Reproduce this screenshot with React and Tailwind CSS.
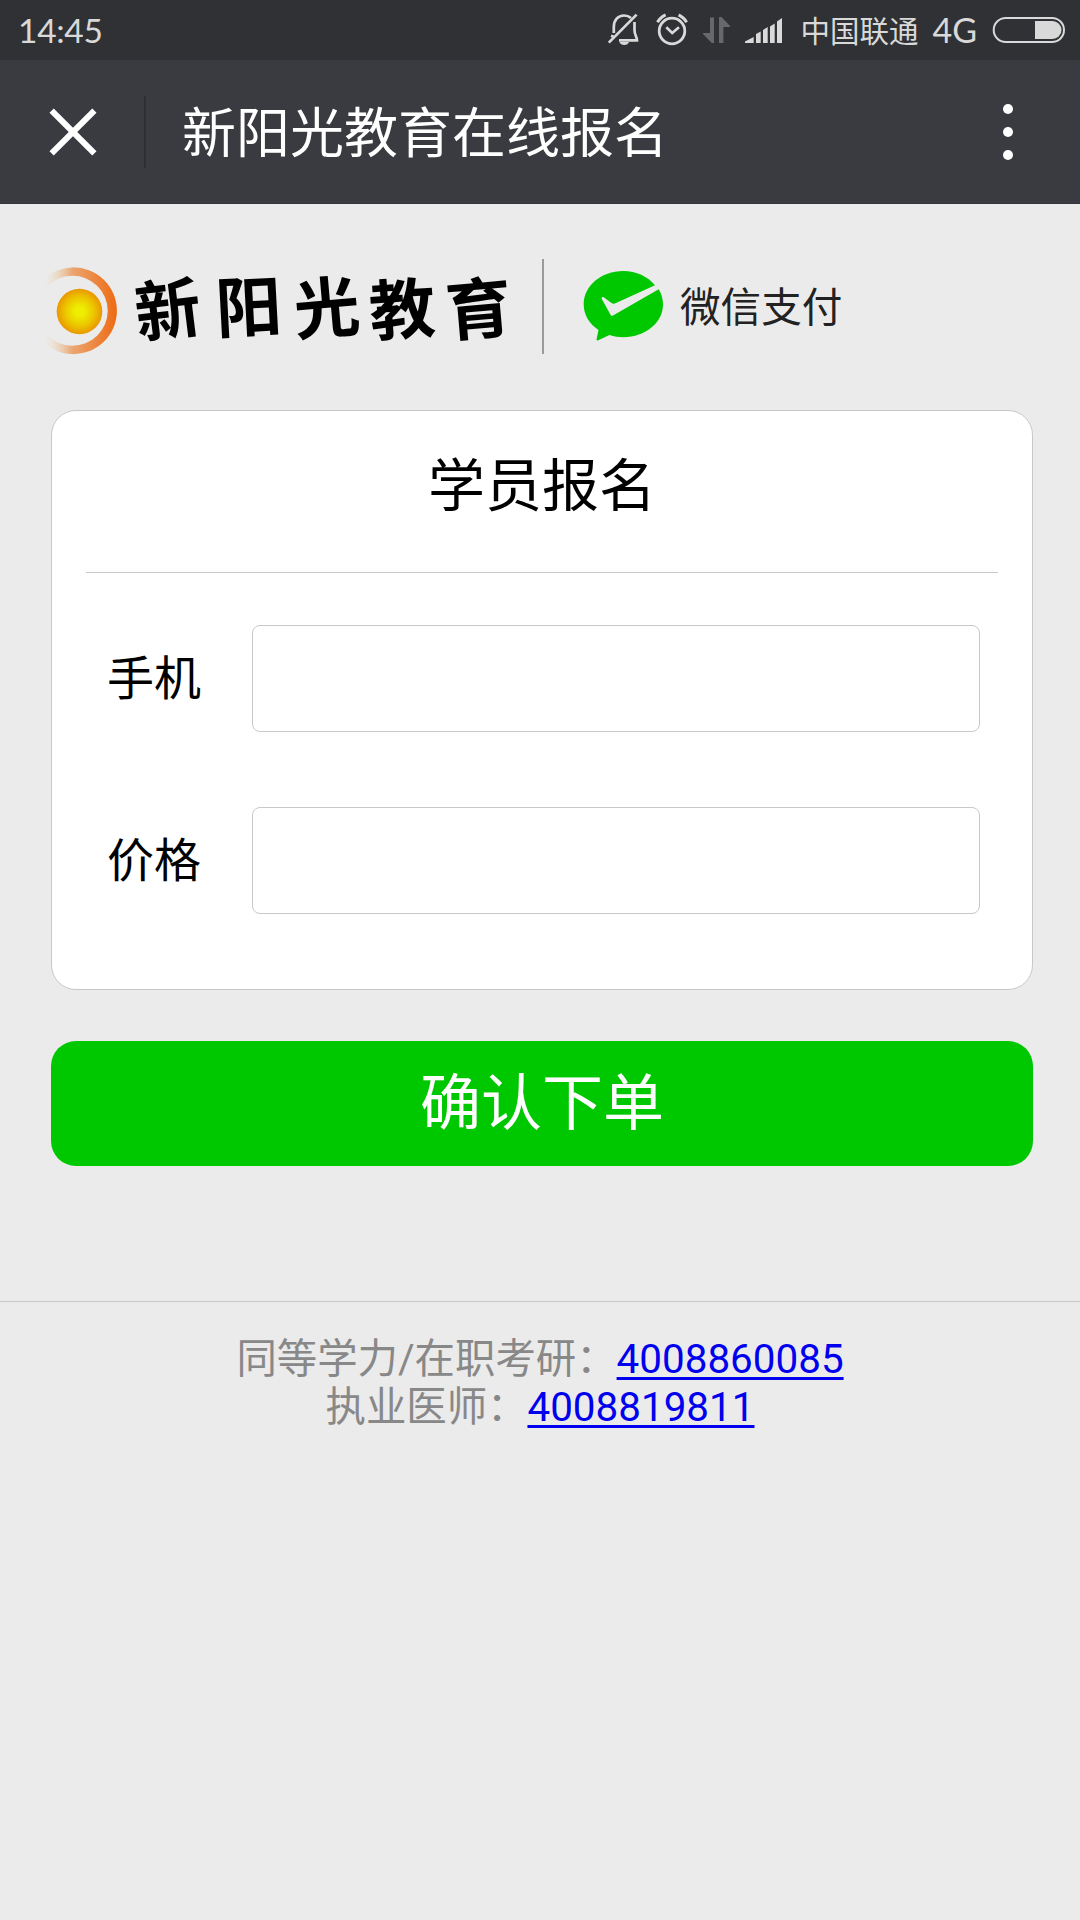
const fields = [
  { id: 'phone', label: '手机', type: 'tel' },
  { id: 'price', label: '价格', type: 'text' },
]

const hotlines = [
  { label: '同等学力/在职考研：', phone: '4008860085' },
  { label: '执业医师：', phone: '4008819811' },
]

function StatusBar() {
  return (
    <div className="flex items-center h-[60px] pl-[18px] pr-[15px] bg-[#303135] text-[#d9d9d9]">
      <span className="font-['Lato',sans-serif] text-[33.5px] leading-[60px] tracking-[-0.3px]">14:45</span>
      <div className="flex items-center ml-auto">
        {/* muted bell */}
        <svg className="w-[32px] h-[60px]" viewBox="607 0 32 60" fill="none" stroke="currentColor" strokeWidth="2.7">
          <path d="M613.8 33V27C613.8 20 618 15.5 624 15.5C627 15.5 629.3 16.5 631 18" />
          <path d="M634.5 22V30C634.5 35 637 37 637 40.3H619" />
          <path d="M608.8 42.6L636.6 14.6" />
          <path d="M611.8 37.5L612.8 35" />
          <path d="M619.5 42H629C628.4 44 626.5 45 624.3 45C622 45 620 44 619.5 42Z" fill="currentColor" stroke="none" />
        </svg>
        {/* alarm */}
        <svg className="w-[33px] h-[60px] ml-[16px]" viewBox="655 0 33 60" fill="none" stroke="currentColor" strokeWidth="2.8">
          <circle cx="672" cy="31" r="12.8" />
          <path d="M666.3 27.2L672.2 33L679 27.2" strokeWidth="2.6" />
          <path d="M657.5 22.3C659.3 18.8 662 16.5 665.6 14.8M678.6 14.8C682 16.5 684.8 18.8 686.6 22.3" strokeWidth="3" />
        </svg>
        {/* data arrows */}
        <svg className="w-[29px] h-[60px] ml-[14px]" viewBox="702 0 29 60" fill="#67686b">
          <path d="M714 43H711.8L703 34V33H710V17.5H714Z" />
          <path d="M719 17H721.5L730 26V27H723.4V43H719Z" />
        </svg>
        {/* signal */}
        <svg className="w-[38px] h-[60px] ml-[13px]" viewBox="744 0 38 60" fill="currentColor">
          <path d="M745 43V41.5L753.7 37V43Z" />
          <path d="M756 43V34L760.7 31.5V43Z" />
          <path d="M763 43V30L767.7 27V43Z" />
          <path d="M770 43V26.5L774.7 23.5V43Z" />
          <path d="M777 43V21.5L782 18V43Z" />
        </svg>
        <span className="font-['Noto_Sans_CJK_SC',sans-serif] text-[29.5px] leading-[58px] -mt-[2px] ml-[18px]">中国联通</span>
        <span className="font-['Lato',sans-serif] text-[34px] leading-[60px] ml-[14px]">4G</span>
        {/* battery */}
        <svg className="w-[73px] h-[60px] ml-[15px]" viewBox="992 0 73 60">
          <rect x="993.7" y="18" width="70.3" height="24" rx="12" fill="none" stroke="currentColor" strokeWidth="2" />
          <path d="M1035 21H1052.5A9 9 0 0 1 1052.5 39H1035Z" fill="currentColor" />
        </svg>
      </div>
    </div>
  )
}

function TitleBar() {
  return (
    <header className="flex items-center h-[144px] bg-[#3a3b40] text-white border-b border-[#35363b]">
      <button className="flex items-center justify-center w-[144px] h-full pl-px pt-px">
        <svg className="w-[48px] h-[48px]" viewBox="0 0 48 48" stroke="currentColor" strokeWidth="6">
          <path d="M2.6 2.6L45.4 45.4M45.4 2.6L2.6 45.4" />
        </svg>
      </button>
      <span className="w-[2px] h-[72px] bg-[#2e2f33]" />
      <h1 className="ml-[36px] text-[54px] leading-[72px] -mt-[4px]">新阳光教育在线报名</h1>
      <button className="flex flex-col items-center gap-[13px] ml-auto mr-[67px]">
        <span className="size-[10px] rounded-full bg-white" />
        <span className="size-[10px] rounded-full bg-white" />
        <span className="size-[10px] rounded-full bg-white" />
      </button>
    </header>
  )
}

function Brands() {
  return (
    <div className="flex items-center h-[95px] mt-[55px]">
      <svg className="w-[501px] h-[135px] ml-[41px] overflow-visible" viewBox="41 239 501 135">
        <defs>
          <linearGradient id="ring" gradientUnits="userSpaceOnUse" x1="42" y1="0" x2="117" y2="0">
            <stop offset="0" stopColor="#ecebd8" stopOpacity="0" />
            <stop offset="0.4" stopColor="#eba672" />
            <stop offset="1" stopColor="#ee6a12" />
          </linearGradient>
          <radialGradient id="sun">
            <stop offset="0.2" stopColor="#eeee00" />
            <stop offset="0.65" stopColor="#ecc400" />
            <stop offset="1" stopColor="#ea9600" />
          </radialGradient>
        </defs>
        <path d="M41 282A43.4 43.4 0 1 1 41 339.5L47 334.5A35 35 0 1 0 47 287Z" fill="url(#ring)" />
        <circle cx="79.5" cy="311.5" r="22.8" fill="url(#sun)" />
        {/* wordmark, each glyph tilted like brush writing */}
        <text x="138 217 296 371 448" y="338 333 335 336 336" rotate="-7 -3 -5 -4 -5" fontSize="66" fontWeight="700" fill="#000">新阳光教育</text>
      </svg>
      <span className="w-[2px] h-[95px] bg-[#9a9a9a]" />
      <svg className="w-[82px] h-[95px] ml-[39px]" viewBox="583 259 82 95">
        <path
          fill="#00c800"
          d="M655 285.3C648 276.5 636 271 623.3 271C601 271 583.7 286 583.7 304.5C583.7 315 589.5 324 598.5 330L596.5 339.5C596.7 340.5 597.5 340.7 598.3 340.3L609.5 335C614 336.5 618.5 337.2 623.3 337.2C645.5 337.2 663 322.5 663 304.5C663 299 661.5 294 658.7 289.3L613 315.5C612 316 611.2 316 610.7 315L601.8 299C601.2 297.5 602.5 296.5 604 297.5L611.5 303C613 304 614.5 303.7 616 303Z"
        />
      </svg>
      <span className="ml-[15px] -mt-[4px] text-[40.6px] leading-[91px] text-[#222]">微信支付</span>
    </div>
  )
}

export default function App() {
  return (
    <div className="w-[1080px] h-[1920px] overflow-hidden bg-[#ebebeb] font-['Noto_Sans_CJK_SC',sans-serif]">
      <StatusBar />
      <TitleBar />
      <main>
        <Brands />

        <form className="ml-[51px] mr-[47px] mt-[56px]">
          <div className="h-[580px] px-[34px] rounded-[25px] border border-[#c8c8c8] bg-white">
            <h2 className="h-[162px] text-center text-[57px] leading-[140px] text-black border-b border-[#c8c8c8]">学员报名</h2>
            <div className="flex flex-col gap-[75px] pt-[51.5px]">
              {fields.map(f => (
                <label key={f.id} className="flex items-center h-[107px] pl-[21px]">
                  <span className="w-[145px] -mt-[6px] text-[47px] leading-[102px] text-black">{f.label}</span>
                  <input type={f.type} name={f.id} className="w-[728px] h-[107px] px-5 text-[47px] rounded-[8px] border border-[#c8c8c8] bg-white" />
                </label>
              ))}
            </div>
          </div>
          <button type="button" className="block w-full h-[125px] mt-[51px] pb-[10px] rounded-[25px] bg-[#00c800] text-white text-[61px] leading-[115px]">确认下单</button>
        </form>

        <footer className="mt-[135px] pt-[34px] border-t border-[#c8c8c8] text-center text-[40.4px] leading-[48px] text-[#888] font-['Roboto','Noto_Sans_CJK_SC',sans-serif]">
          {hotlines.map(h => (
            <p key={h.phone} className="h-[48px]">
              {h.label}
              <a href={`tel:${h.phone}`} className="text-[#0000ee] underline decoration-[3px] underline-offset-[4px]">{h.phone}</a>
            </p>
          ))}
        </footer>
      </main>
    </div>
  )
}
